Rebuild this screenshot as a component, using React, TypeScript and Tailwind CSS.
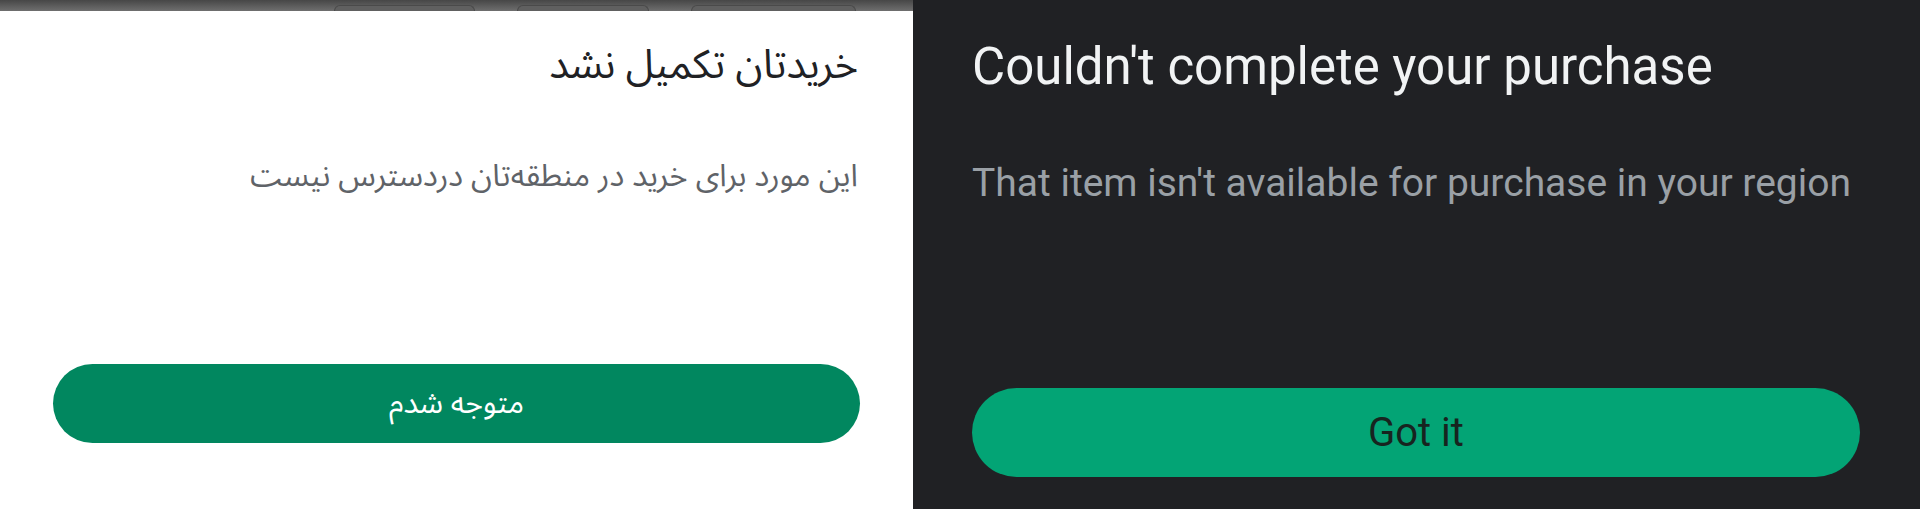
const persian = 'font-["Noto_Sans_Arabic","Vazirmatn","DejaVu_Sans",sans-serif]';

function TabStrip() {
  return (
    <div className="flex h-[11px] items-end gap-[42px] bg-gradient-to-b from-[#474747] to-[#6f6f6f] pl-[334px]">
      <div className="h-[6px] w-[141px] rounded-t-[8px] border-x border-t border-[#4a4a4a] bg-[#606060]" />
      <div className="h-[6px] w-[132px] rounded-t-[8px] border-x border-t border-[#4a4a4a] bg-[#606060]" />
      <div className="h-[6px] w-[165px] rounded-t-[8px] border-x border-t border-[#4a4a4a] bg-[#606060]" />
    </div>
  );
}

function PersianDialog() {
  return (
    <div className="flex w-[913px] shrink-0 flex-col bg-white">
      <TabStrip />
      <div dir="rtl" className={`flex flex-col px-[53px] ${persian}`}>
        <h1 className="mt-[35px] pr-[2px] text-[40px] leading-none text-[#202124]">
          خریدتان تکمیل نشد
        </h1>
        <p className="mt-[75px] pr-[2px] text-[31px] leading-none text-[#5f6368]">
          این مورد برای خرید در منطقه‌تان دردسترس نیست
        </p>
        <button
          type="button"
          className="mt-[172px] h-[79px] w-full rounded-full bg-[#01875f] text-[30px] text-white"
        >
          متوجه شدم
        </button>
      </div>
    </div>
  );
}

function EnglishDialog() {
  return (
    <div className="flex flex-1 flex-col bg-[#202124] pl-[59px] pr-[59px] font-['Roboto',sans-serif]">
      <h1 className="mt-[41px] text-[51px] leading-none text-[#f1f3f4]">
        Couldn&apos;t complete your purchase
      </h1>
      <p className="mt-[72px] text-[39px] leading-none text-[#9aa0a6]">
        That item isn&apos;t available for purchase in your region
      </p>
      <button
        type="button"
        className="mt-[185px] h-[89px] w-[888px] rounded-full bg-[#03a475] text-[40px] text-[#17241f]"
      >
        Got it
      </button>
    </div>
  );
}

export default function App() {
  return (
    <div className="flex h-[509px] w-[1920px] overflow-hidden">
      <PersianDialog />
      <EnglishDialog />
    </div>
  );
}
